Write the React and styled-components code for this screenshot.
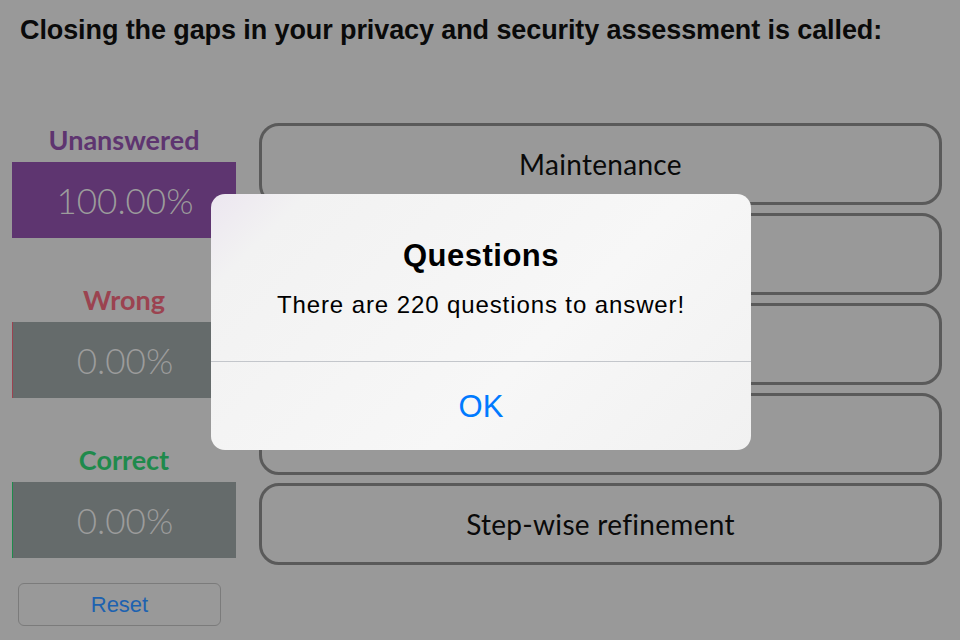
import styled, { createGlobalStyle } from 'styled-components';

// Colours as they appear under the alert's dimming layer
const colors = {
    page: '#999999',
    ink: '#0a0a0a',
    outline: '#5a5a5a',
    boxGray: '#656b6b',
    boxText: '#9c9c9c',
    purple: '#5e3570',
    red: '#9b4350',
    green: '#1f8a4c',
    link: '#1d62b0',
    iosBlue: '#007aff',
};

const GlobalStyle = createGlobalStyle`
    html, body {
        margin: 0;
        padding: 0;
        background: ${colors.page};
    }
    * { box-sizing: border-box; }
`;

const Screen = styled.div`
    position: relative;
    width: 960px;
    height: 640px;
    overflow: hidden;
    background: ${colors.page};
    font-family: Lato, "Open Sans", sans-serif;
`;

const Question = styled.h1`
    margin: 0;
    padding: 14px 0 0 20px;
    height: 123px;
    font-family: "Liberation Sans", Arial, sans-serif;
    font-size: 27px;
    line-height: 32px;
    font-weight: bold;
    letter-spacing: -0.1px;
    color: ${colors.ink};
`;

const Body = styled.div`
    display: flex;
    gap: 23px;
    padding-left: 12px;
`;

const ScoreColumn = styled.div`
    width: 224px;
    display: flex;
    flex-direction: column;
`;

const ScoreLabel = styled.div`
    height: 39px;
    line-height: 34px;
    text-align: center;
    font-family: Lato, sans-serif;
    font-size: 27px;
    font-weight: bold;
    color: ${(p) => p.$color};
    margin-top: ${(p) => (p.$first ? '0' : '45px')};
`;

const ScoreBox = styled.div`
    position: relative;
    height: 76px;
    background: ${colors.boxGray};
    display: flex;
    align-items: center;
    justify-content: center;
`;

const ScoreFill = styled.div`
    position: absolute;
    left: 0;
    top: 0;
    bottom: 0;
    min-width: 1px;
    background: ${(p) => p.$color};
`;

const ScoreValue = styled.span`
    position: relative;
    font-family: Lato, sans-serif;
    font-weight: 300;
    font-size: 35px;
    color: ${colors.boxText};
    margin-left: 2px;
`;

const ResetButton = styled.button`
    margin: 25px 0 0 6px;
    width: 203px;
    height: 43px;
    border: 1px solid #7b7b7b;
    border-radius: 6px;
    background: transparent;
    font-family: "Liberation Sans", Arial, sans-serif;
    font-size: 22px;
    color: ${colors.link};
    padding: 0;
`;

const AnswerList = styled.div`
    width: 683px;
    display: flex;
    flex-direction: column;
    gap: 8px;
`;

const Answer = styled.div`
    height: 82px;
    border: 3px solid ${colors.outline};
    border-radius: 20px;
    display: flex;
    align-items: center;
    justify-content: center;
    font-family: Lato, sans-serif;
    font-size: 28px;
    letter-spacing: 0.3px;
    color: ${colors.ink};
`;

const Alert = styled.div`
    position: absolute;
    left: 211px;
    top: 194px;
    width: 540px;
    height: 256px;
    border-radius: 14px;
    background: linear-gradient(135deg, #ece6f0 0%, #f2f2f2 12%, #f7f7f7 60%, #f1f1f1 100%);
    display: flex;
    flex-direction: column;
    overflow: hidden;
    font-family: "Liberation Sans", Arial, sans-serif;
`;

const AlertContent = styled.div`
    height: 168px;
    text-align: center;
    padding-top: 43px;
    border-bottom: 1px solid #c3c6cb;
`;

const AlertTitle = styled.div`
    font-size: 31px;
    line-height: 38px;
    font-weight: bold;
    color: #000;
    letter-spacing: 0.5px;
`;

const AlertMessage = styled.div`
    margin-top: 15px;
    font-size: 24px;
    line-height: 30px;
    color: #000;
    letter-spacing: 0.9px;
`;

const AlertAction = styled.div`
    flex: 1;
    display: flex;
    align-items: center;
    justify-content: center;
    padding-top: 2px;
    font-size: 31px;
    color: ${colors.iosBlue};
`;

const scores = [
    { label: 'Unanswered', color: colors.purple, value: 100 },
    { label: 'Wrong', color: colors.red, value: 0 },
    { label: 'Correct', color: colors.green, value: 0 },
];

const answers = ['Maintenance', 'Remediation', 'Mitigation', 'Gap analysis', 'Step-wise refinement'];

const App = () => {
    return (
        <>
            <GlobalStyle />
            <Screen>
                <Question>Closing the gaps in your privacy and security assessment is called:</Question>
                <Body>
                    <ScoreColumn>
                        {scores.map((s, i) => (
                            <div key={s.label}>
                                <ScoreLabel $color={s.color} $first={i === 0}>{s.label}</ScoreLabel>
                                <ScoreBox>
                                    <ScoreFill $color={s.color} style={{ width: `${s.value}%` }} />
                                    <ScoreValue>{s.value.toFixed(2)}%</ScoreValue>
                                </ScoreBox>
                            </div>
                        ))}
                        <ResetButton>Reset</ResetButton>
                    </ScoreColumn>
                    <AnswerList>
                        {answers.map((a) => (
                            <Answer key={a}>{a}</Answer>
                        ))}
                    </AnswerList>
                </Body>
                <Alert>
                    <AlertContent>
                        <AlertTitle>Questions</AlertTitle>
                        <AlertMessage>There are 220 questions to answer!</AlertMessage>
                    </AlertContent>
                    <AlertAction>OK</AlertAction>
                </Alert>
            </Screen>
        </>
    );
};

export default App;
